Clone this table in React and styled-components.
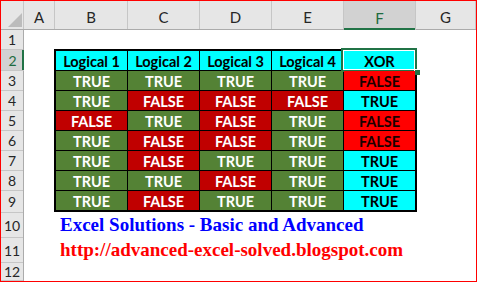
import React from "react";
import styled, { createGlobalStyle } from "styled-components";

const GlobalStyle = createGlobalStyle`
  html, body {
    margin: 0;
    padding: 0;
    background: #fff;
    overflow: hidden;
  }
`;

const COLS = [
  { name: "A", width: 31 },
  { name: "B", width: 73 },
  { name: "C", width: 72 },
  { name: "D", width: 72 },
  { name: "E", width: 72 },
  { name: "F", width: 72, active: true },
  { name: "G", width: 0 },
];

const ROW_HEIGHTS = [20, 21, 20, 20, 20, 20, 20, 20, 22, 25, 25, 0];

const HEADERS = ["Logical 1", "Logical 2", "Logical 3", "Logical 4", "XOR"];

const DATA = [
  [true, true, true, true],
  [true, false, false, false],
  [false, true, false, true],
  [true, false, false, true],
  [true, false, true, true],
  [true, true, false, true],
  [true, false, true, true],
];

const TONES = {
  head: { bg: "#00ffff", fg: "#000" },
  yes: { bg: "#548235", fg: "#fff" },
  no: { bg: "#c00000", fg: "#fff" },
  xorYes: { bg: "#00ffff", fg: "#000" },
  xorNo: { bg: "#ff0000", fg: "#1a0000" },
};

const App = () => {
  return (
    <>
      <GlobalStyle />
      <Frame>
        <ColumnBar>
          <Corner>
            <svg width="14" height="14" viewBox="0 0 14 14">
              <polygon points="14,0 14,14 0,14" fill="#bcbcbc" />
            </svg>
          </Corner>
          {COLS.map((c) => (
            <ColHead key={c.name} $width={c.width} $active={c.active}>
              {c.name}
            </ColHead>
          ))}
        </ColumnBar>
        <Body>
          <RowHeads>
            {ROW_HEIGHTS.map((h, i) => (
              <RowHead key={i} $height={h} $active={i === 1}>
                {i + 1}
              </RowHead>
            ))}
          </RowHeads>
          <Sheet>
            <DataTable>
              {HEADERS.map((h, i) => (
                <Cell key={h} $tone="head">
                  {h}
                  {i === 4 && (
                    <Selection>
                      <Handle />
                    </Selection>
                  )}
                </Cell>
              ))}
              {DATA.map((row, r) => {
                const xor = row.filter(Boolean).length % 2 === 1;
                return (
                  <React.Fragment key={r}>
                    {row.map((v, c) => (
                      <Cell key={c} $tone={v ? "yes" : "no"}>
                        {v ? "TRUE" : "FALSE"}
                      </Cell>
                    ))}
                    <Cell $tone={xor ? "xorYes" : "xorNo"}>
                      {xor ? "TRUE" : "FALSE"}
                    </Cell>
                  </React.Fragment>
                );
              })}
            </DataTable>
            <Caption $color="#0000ff">Excel Solutions - Basic and Advanced</Caption>
            <Caption $color="#ff0000">http://advanced-excel-solved.blogspot.com</Caption>
          </Sheet>
        </Body>
      </Frame>
    </>
  );
};

export default App;

const Frame = styled.div`
  width: 477px;
  height: 282px;
  box-sizing: border-box;
  border: 1px solid #ff0000;
  display: flex;
  flex-direction: column;
  background: #fff;
  overflow: hidden;
  font-family: Lato, "Liberation Sans", sans-serif;
`;

const ColumnBar = styled.div`
  display: flex;
  height: 28px;
  flex-shrink: 0;
  background: #e6e6e6;
  border-bottom: 1px solid #ababab;
  box-sizing: content-box;
`;

const Corner = styled.div`
  width: 23px;
  flex-shrink: 0;
  border-right: 1px solid #c6c6c6;
  display: flex;
  align-items: flex-end;
  justify-content: flex-end;
  padding: 0 1px 2px 0;
  box-sizing: border-box;
`;

const ColHead = styled.div`
  width: ${(p) => (p.$width ? `${p.$width}px` : "auto")};
  flex: ${(p) => (p.$width ? "0 0 auto" : "1")};
  box-sizing: border-box;
  display: flex;
  align-items: flex-end;
  justify-content: center;
  padding-bottom: 3px;
  font-size: 15px;
  color: ${(p) => (p.$active ? "#1e6b40" : "#262626")};
  background: ${(p) => (p.$active ? "#d2d2d2" : "transparent")};
  border-right: 1px solid #c6c6c6;
  box-shadow: ${(p) => (p.$active ? "inset 0 -2px 0 #217346" : "none")};
  margin-bottom: ${(p) => (p.$active ? "-1px" : "0")};
`;

const Body = styled.div`
  display: flex;
  flex: 1;
  min-height: 0;
`;

const RowHeads = styled.div`
  width: 23px;
  flex-shrink: 0;
  display: flex;
  flex-direction: column;
  background: #e6e6e6;
  border-right: 1px solid #ababab;
  box-sizing: border-box;
`;

const RowHead = styled.div`
  height: ${(p) => (p.$height ? `${p.$height}px` : "auto")};
  flex: ${(p) => (p.$height ? "0 0 auto" : "1")};
  box-sizing: border-box;
  border-bottom: 1px solid #c6c6c6;
  display: flex;
  align-items: center;
  justify-content: center;
  font-size: 14px;
  color: ${(p) => (p.$active ? "#1e6b40" : "#262626")};
  background: ${(p) => (p.$active ? "#d2d2d2" : "transparent")};
  box-shadow: ${(p) => (p.$active ? "inset -2px 0 0 #217346" : "none")};
  margin-right: ${(p) => (p.$active ? "-1px" : "0")};
`;

const Sheet = styled.div`
  flex: 1;
  display: flex;
  flex-direction: column;
  align-items: flex-start;
  padding: 19px 0 0 30px;
`;

const DataTable = styled.div`
  display: grid;
  grid-template-columns: repeat(5, 71px);
  grid-auto-rows: 19px;
  gap: 1px;
  background: #000;
  border: 2px solid #000;
`;

const Cell = styled.div`
  position: relative;
  display: flex;
  align-items: center;
  justify-content: center;
  padding-top: 2px;
  box-sizing: border-box;
  font-size: 14.5px;
  font-weight: 700;
  background: ${(p) => TONES[p.$tone].bg};
  color: ${(p) => TONES[p.$tone].fg};
`;

const Selection = styled.div`
  position: absolute;
  inset: -3px -2px -2px -3px;
  border: 2px solid #217346;
  box-shadow: inset 0 0 0 1px #fff;
  pointer-events: none;
`;

const Handle = styled.div`
  position: absolute;
  right: -5px;
  bottom: -5px;
  width: 5px;
  height: 5px;
  background: #217346;
  border-left: 1px solid #fff;
  border-top: 1px solid #fff;
`;

const Caption = styled.div`
  height: 25px;
  box-sizing: border-box;
  padding: 3px 0 0 6px;
  font-family: "Liberation Serif", "Times New Roman", serif;
  font-weight: 700;
  font-size: 19px;
  line-height: 20px;
  white-space: nowrap;
  color: ${(p) => p.$color};
`;
